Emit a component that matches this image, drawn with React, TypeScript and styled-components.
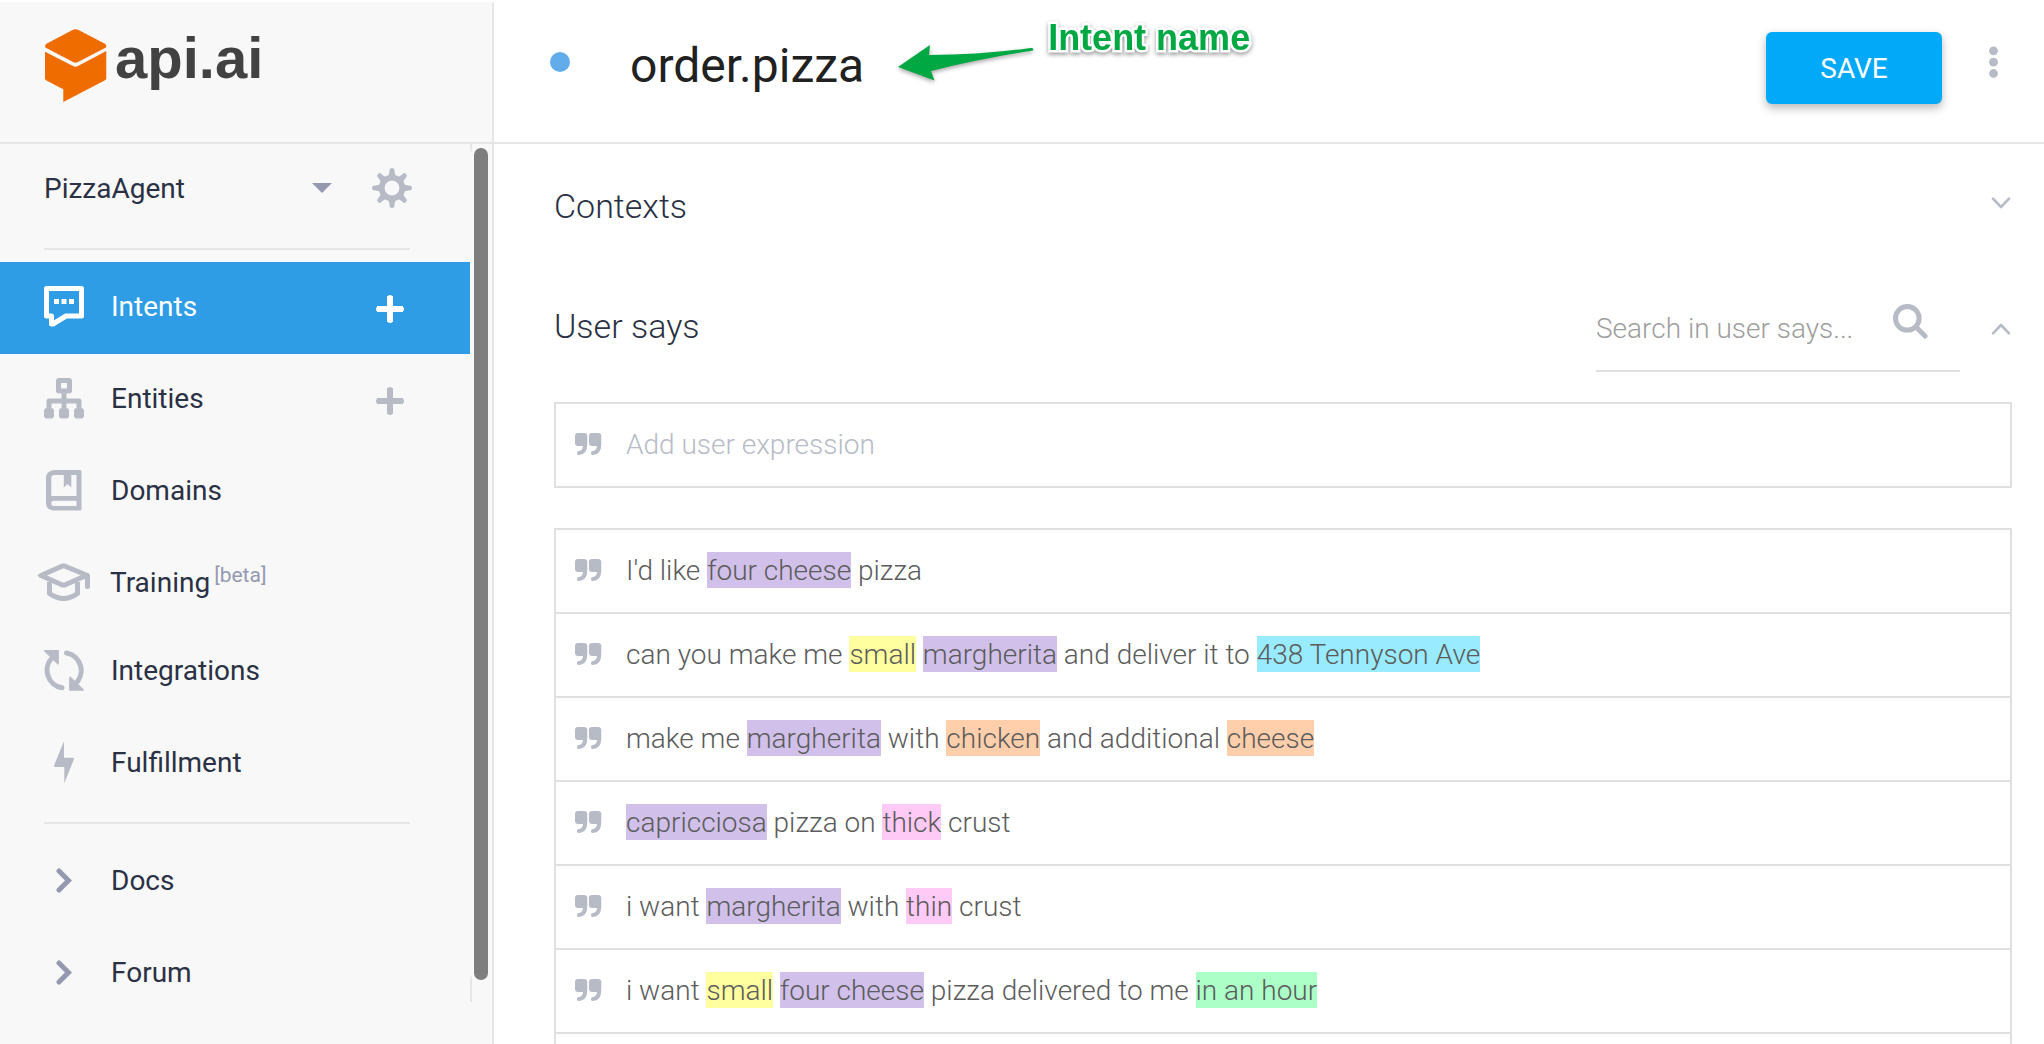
import React from "react";
import styled, { createGlobalStyle, css } from "styled-components";

const color = {
  line: "#e6e6e6",
  box: "#e0e0e0",
  side: "#f8f8f8",
  ink: "#2b3144",
  icon: "#b7bbc6",
  muted: "#9499b0",
  active: "#2e9de6",
  save: "#03a9f9",
  note: "#00a844",
};

const tags = {
  purple: "#d1c1ea",
  yellow: "#ffffa0",
  cyan: "#99ebff",
  orange: "#ffcfab",
  pink: "#ffcaf6",
  green: "#abffc7",
};

const GlobalStyle = createGlobalStyle`
  *, *::before, *::after { box-sizing: border-box; }
  body {
    margin: 0;
    background: #fff;
    color: ${color.ink};
    font-family: Roboto, "Liberation Sans", sans-serif;
    font-size: 28px;
  }
  button, input { font: inherit; color: inherit; }
  h1, h2, ul { margin: 0; padding: 0; font: inherit; }
  ul { list-style: none; }
  a { color: inherit; text-decoration: none; }
  svg { display: block; flex: none; }
`;

const bareButton = css`
  display: flex;
  align-items: center;
  justify-content: center;
  padding: 0;
  border: 0;
  background: none;
  cursor: pointer;
`;

const Page = styled.div`
  display: grid;
  grid-template-columns: 494px minmax(0, 1fr);
  height: 100vh;
  padding-top: 2px;
  overflow: hidden;
`;

/* ---------- sidebar ---------- */

const Sidebar = styled.aside`
  display: flex;
  flex-direction: column;
  min-height: 0;
  background: ${color.side};
  border-right: 2px solid ${color.line};
`;

const Brand = styled.a`
  display: flex;
  align-items: flex-start;
  gap: 8px;
  height: 142px;
  flex: none;
  padding: 27px 0 0 45px;
  border-bottom: 2px solid ${color.line};
`;

const BrandName = styled.span`
  color: #424242;
  font: 700 58px/58px "Liberation Sans", Arial, sans-serif;
`;

const SidebarBody = styled.div`
  display: flex;
  flex: 1;
  min-height: 0;
`;

const Menu = styled.nav`
  flex: 1;
  min-width: 0;
`;

const Track = styled.div`
  display: flex;
  width: 22px;
  padding: 4px 0 64px 4px;
  background: linear-gradient(
      to bottom,
      ${color.line} 4px,
      transparent 10px,
      transparent calc(100% - 70px),
      ${color.line} calc(100% - 64px),
      ${color.line} calc(100% - 42px),
      transparent calc(100% - 42px)
    )
    left / 2px 100% no-repeat;
`;

const Thumb = styled.div`
  width: 14px;
  border-radius: 7px;
  background: #7e7e7e;
`;

const AgentRow = styled.div`
  display: flex;
  align-items: center;
  height: 106px;
  margin: 0 60px 0 44px;
  padding-bottom: 16px;
  border-bottom: 2px solid ${color.line};
`;

const AgentButton = styled.button`
  ${bareButton}
  flex: 1;
  justify-content: space-between;
  height: 40px;
  margin-right: 40px;
`;

const IconButton = styled.button`
  ${bareButton}
  margin-right: -2px;
`;

const NavList = styled.ul`
  margin: 12px 0;
`;

const NavItem = styled.li<{ $active?: boolean; $short?: boolean }>`
  display: flex;
  height: ${(p) => (p.$short ? 88 : 92)}px;
  padding-right: 66px;
  background: ${(p) => (p.$active ? color.active : "transparent")};
  color: ${(p) => (p.$active ? "#fff" : color.ink)};
`;

const NavLink = styled.a<{ $short?: boolean }>`
  display: flex;
  flex: 1;
  align-items: center;
  padding: 0 0 ${(p) => (p.$short ? 0 : 4)}px 37px;
  gap: ${(p) => (p.$short ? 19 : 20)}px;
`;

const IconSlot = styled.span<{ $tone?: string }>`
  display: flex;
  justify-content: center;
  width: 54px;
  color: ${(p) => p.$tone ?? color.icon};
`;

const Beta = styled.sup`
  margin-left: 4px;
  color: ${color.muted};
  font-size: 21px;
  line-height: 0;
  vertical-align: 10px;
`;

const AddButton = styled.button<{ $tone: string }>`
  ${bareButton}
  padding-top: 2px;
  color: ${(p) => p.$tone};
`;

const Divider = styled.hr`
  height: 2px;
  margin: 0 60px 0 44px;
  border: 0;
  background: ${color.line};
`;

/* ---------- main ---------- */

const Main = styled.main`
  display: flex;
  flex-direction: column;
  min-width: 0;
  min-height: 0;
  overflow: hidden;
`;

const TopBar = styled.header`
  display: flex;
  align-items: flex-start;
  height: 142px;
  flex: none;
  padding: 30px 40px 0 56px;
  border-bottom: 2px solid ${color.line};
`;

const StatusSlot = styled.span`
  display: flex;
  align-items: center;
  height: 60px;
  margin-right: 60px;
`;

const StatusDot = styled.span`
  width: 20px;
  height: 20px;
  border-radius: 50%;
  background: #63aceb;
`;

const TitleBox = styled.div`
  position: relative;
  margin-right: auto;
`;

const Title = styled.h1`
  color: #212121;
  font-size: 48px;
  line-height: 68px;
`;

const Note = styled.div`
  position: absolute;
  top: -15px;
  left: 100%;
  display: flex;
  align-items: flex-start;
  gap: 14px;
  padding-left: 34px;
`;

const NoteArrow = styled.svg`
  margin-top: 28px;
  filter: drop-shadow(0 2px 2px rgba(0, 0, 0, 0.35));
`;

const NoteText = styled.span`
  color: ${color.note};
  font: 700 36px/42px "Liberation Sans", Arial, sans-serif;
  white-space: nowrap;
  -webkit-text-stroke: 5px #fff;
  paint-order: stroke fill;
  filter: drop-shadow(0 2px 2px rgba(0, 0, 0, 0.4));
`;

const SaveButton = styled.button`
  width: 176px;
  height: 72px;
  margin-right: 40px;
  padding: 0;
  border: 0;
  border-radius: 6px;
  background: ${color.save};
  box-shadow: 0 4px 10px rgba(0, 0, 0, 0.28);
  color: #fff;
  cursor: pointer;
`;

const KebabButton = styled.button`
  ${bareButton}
  width: 22px;
  height: 60px;
`;

const Content = styled.div`
  padding: 0 32px 0 60px;
`;

const SectionHead = styled.div<{ $height: number }>`
  display: flex;
  align-items: flex-start;
  height: ${(p) => p.$height}px;
  padding-top: 40px;
`;

const SectionTitle = styled.h2`
  flex: 1;
  font-size: 34px;
  font-weight: 300;
  line-height: 44px;
`;

const Toggle = styled.button<{ $height: number }>`
  ${bareButton}
  width: 22px;
  height: ${(p) => p.$height}px;
`;

const SearchField = styled.label`
  display: flex;
  align-items: flex-start;
  width: 364px;
  margin-right: 30px;
  padding: 0 32px 18px 0;
  border-bottom: 2px solid ${color.box};
`;

const TextInput = styled.input<{ $hint: string }>`
  flex: 1;
  min-width: 0;
  height: 48px;
  padding: 0;
  border: 0;
  outline: 0;
  background: none;
  font-weight: 300;
  &::placeholder {
    color: ${(p) => p.$hint};
    opacity: 1;
  }
`;

const rowShape = css`
  display: flex;
  align-items: center;
  gap: 24px;
  padding: 0 19px 2px;
  font-weight: 300;
`;

const ExpressionField = styled.label`
  ${rowShape}
  height: 86px;
  border: 2px solid ${color.box};
`;

const Expressions = styled.ul`
  margin-top: 40px;
  border: 2px solid ${color.box};
`;

const Expression = styled.li`
  ${rowShape}
  height: 84px;
  border-bottom: 2px solid ${color.box};
  color: #5c5c5c;
`;

const Mark = styled.mark<{ $tag: keyof typeof tags }>`
  padding: 2px 0 1px;
  background: ${(p) => tags[p.$tag]};
  color: inherit;
`;

/* ---------- drawings ---------- */

const BrandMark = () => (
  <svg width="62" height="74" viewBox="0 0 62 74" fill="#ef6c00" aria-hidden="true">
    <path d="M27.500 1Q30.500-.7 33.500 1L60 14.800Q62 16.200 61 18.600L33 33Q30.500 34.400 28 33L.4 18.600Q-.5 16.200 1.500 14.800Z" />
    <path d="M0 22.700L28 37Q30.500 38.300 33 37L61.300 22V49.500Q61.300 50.600 60 51.300L18.300 73V60.200L1 51.300Q0 50.700 0 49.500Z" />
  </svg>
);

const Gear = () => (
  <svg width="40" height="40" viewBox="-20 -20 40 40" stroke={color.icon} fill="none" aria-hidden="true">
    <circle r="10.300" strokeWidth="5.800" />
    {[0, 45, 90, 135, 180, 225, 270, 315].map((a) => (
      <g key={a} transform={`rotate(${a})`}>
        <path d="M0-11V-17.400" strokeWidth="5" strokeLinecap="round" />
        <path d="M-5-11.500Q-2.500-12.500-2.500-16L2.500-16Q2.500-12.500 5-11.500Z" fill={color.icon} stroke="none" />
      </g>
    ))}
  </svg>
);

const Caret = () => (
  <svg width="20" height="10" viewBox="0 0 20 10" fill={color.muted} aria-hidden="true">
    <path d="M0 0H20L10 10Z" />
  </svg>
);

const IntentsIcon = () => (
  <svg width="40" height="41" viewBox="0 0 40 41" fill="none" stroke="currentColor" strokeWidth="5" strokeLinejoin="round" aria-hidden="true">
    <path d="M2.500 2.500H37.500V30H22L9 38H7.500V30H2.500Z" />
    <path d="M10 13h5v5h-5zM17.500 13h5v5h-5zM25 13h5v5h-5z" fill="currentColor" stroke="none" />
  </svg>
);

const EntitiesIcon = () => (
  <svg width="40" height="41" viewBox="0 0 40 41" fill="none" stroke="currentColor" strokeWidth="5" strokeLinejoin="round" aria-hidden="true">
    <rect x="14.500" y="2.500" width="11" height="10.500" rx="0.500" />
    <path d="M20 15V31M5 31V23H35V31" />
    <g fill="currentColor" stroke="none">
      <rect x="0" y="30" width="10" height="10.500" rx="3" />
      <rect x="15" y="30" width="10" height="10.500" rx="3" />
      <rect x="30" y="30" width="10" height="10.500" rx="3" />
    </g>
  </svg>
);

const DomainsIcon = () => (
  <svg width="36" height="41" viewBox="0 0 36 41" fill="currentColor" aria-hidden="true">
    <path
      fillRule="evenodd"
      d="M8 0H34Q35.500 0 35.500 1.500V39Q35.500 40.500 34 40.500H7Q0 39.500 0 33V8Q0 1 8 0ZM8.500 5Q5.300 5 5.300 8V26H30.500V5H25.300V17.500L21.500 14L17.800 17.500V5ZM8 30.800Q5.300 31 5.300 33.500T8 36H30.500V30.800Z"
    />
  </svg>
);

const TrainingIcon = () => (
  <svg width="54" height="38" viewBox="0 0 54 38" fill="none" stroke="currentColor" strokeWidth="5" strokeLinejoin="round" strokeLinecap="round" aria-hidden="true">
    <path d="M4 12.500L24.800 3.200Q26.500 2.600 28.200 3.200L50.500 12.500V23.500M4 12.500L24.800 21.800Q26.500 22.400 28.200 21.800L48 13" />
    <path d="M12.500 19V30.500Q26.500 40.500 40.500 30.500V19" strokeLinecap="butt" />
    <path d="M0 12.500L8 9V16Z" fill="currentColor" stroke="none" />
  </svg>
);

const IntegrationsIcon = () => (
  <svg width="40" height="41" viewBox="0 0 40 41" fill="none" stroke="currentColor" strokeWidth="5" strokeLinecap="round" strokeLinejoin="round" aria-hidden="true">
    <path d="M9 7A17.800 17.800 0 0 0 18 37.800" />
    <path d="M22.500 3A17.800 17.800 0 0 1 31 34" />
    <path d="M1 .8H14V13.500ZM39 39.800H26V27.500Z" fill="currentColor" strokeWidth="1.800" />
  </svg>
);

const FulfillmentIcon = () => (
  <svg width="20" height="41" viewBox="0 0 20 41" fill="currentColor" aria-hidden="true">
    <path d="M9.500.5L10 0V15.800H19Q20.300 15.800 19.800 17.500L10.800 40L10.300 41V25H1Q-.3 25 .2 23Z" />
  </svg>
);

const LinkChevron = () => (
  <svg width="16" height="25" viewBox="0 0 16 25" fill="none" stroke="currentColor" strokeWidth="5" strokeLinecap="round" aria-hidden="true">
    <path d="M3 3L12.500 12.500L3 22" />
  </svg>
);

const Plus = () => (
  <svg width="28" height="28" viewBox="0 0 28 28" stroke="currentColor" strokeWidth="6" aria-hidden="true">
    <path d="M14 2.500V25.500M2.500 14H25.500" strokeLinecap="round" strokeWidth="5" />
    <path d="M14 1V27M1 14H27" />
  </svg>
);

const Kebab = () => (
  <svg width="10" height="32" viewBox="0 0 10 32" fill={color.icon} aria-hidden="true">
    <circle cx="5.500" cy="4.800" r="4.400" />
    <circle cx="5.500" cy="16.200" r="4.400" />
    <circle cx="5.500" cy="27.500" r="4.400" />
  </svg>
);

const Chevron = ({ up }: { up?: boolean }) => (
  <svg width="20" height="12" viewBox="0 0 20 12" fill="none" stroke={color.icon} strokeWidth="2.600" strokeLinecap="round" strokeLinejoin="round" aria-hidden="true">
    <path d={up ? "M2 10.300L10 2L18 10.300" : "M2 1.700L10 10L18 1.700"} />
  </svg>
);

const Magnifier = () => (
  <svg width="35" height="35" viewBox="0 0 35 35" fill="none" stroke={color.icon} strokeWidth="5" aria-hidden="true">
    <circle cx="14.300" cy="14.300" r="11.800" />
    <path d="M23 23L32 32" strokeLinecap="round" />
  </svg>
);

const Quote = () => (
  <svg width="27" height="22" viewBox="0 0 27 22" fill={color.icon} aria-hidden="true">
    {[0, 14].map((x) => (
      <path
        key={x}
        transform={`translate(${x} 0)`}
        d="M3 0H9Q12.300 0 12.300 3V11Q12.300 21.500 4 22Q2 22 2 20.500V19.500Q2 18 4 18Q7.600 17.400 8 13H3Q0 13 0 10V3Q0 0 3 0Z"
      />
    ))}
  </svg>
);

/* ---------- data ---------- */

type Item = { name: string; icon: React.ReactNode; active?: boolean; add?: boolean; beta?: boolean };

const items: Item[] = [
  { name: "Intents", icon: <IntentsIcon />, active: true, add: true },
  { name: "Entities", icon: <EntitiesIcon />, add: true },
  { name: "Domains", icon: <DomainsIcon /> },
  { name: "Training", icon: <TrainingIcon />, beta: true },
  { name: "Integrations", icon: <IntegrationsIcon /> },
  { name: "Fulfillment", icon: <FulfillmentIcon /> },
];

type Part = string | [string, keyof typeof tags];

const expressions: Part[][] = [
  ["I'd like ", ["four cheese", "purple"], " pizza"],
  ["can you make me ", ["small", "yellow"], " ", ["margherita", "purple"], " and deliver it to ", ["438 Tennyson Ave", "cyan"]],
  ["make me ", ["margherita", "purple"], " with ", ["chicken", "orange"], " and additional ", ["cheese", "orange"]],
  [["capricciosa", "purple"], " pizza on ", ["thick", "pink"], " crust"],
  ["i want ", ["margherita", "purple"], " with ", ["thin", "pink"], " crust"],
  ["i want ", ["small", "yellow"], " ", ["four cheese", "purple"], " pizza delivered to me ", ["in an hour", "green"]],
  [],
];

export default function App() {
  return (
    <>
      <GlobalStyle />
      <Page>
        <Sidebar>
          <Brand href="#">
            <BrandMark />
            <BrandName>api.ai</BrandName>
          </Brand>
          <SidebarBody>
            <Menu>
              <AgentRow>
                <AgentButton>
                  PizzaAgent
                  <Caret />
                </AgentButton>
                <IconButton aria-label="Agent settings">
                  <Gear />
                </IconButton>
              </AgentRow>
              <NavList>
                {items.map((it) => (
                  <NavItem key={it.name} $active={it.active} $short={it.beta}>
                    <NavLink href="#" $short={it.beta}>
                      <IconSlot $tone={it.active ? "#fff" : undefined}>{it.icon}</IconSlot>
                      <span>
                        {it.name}
                        {it.beta && <Beta>[beta]</Beta>}
                      </span>
                    </NavLink>
                    {it.add && (
                      <AddButton $tone={it.active ? "#fff" : color.icon} aria-label={`Add to ${it.name}`}>
                        <Plus />
                      </AddButton>
                    )}
                  </NavItem>
                ))}
              </NavList>
              <Divider />
              <NavList>
                {["Docs", "Forum"].map((name) => (
                  <NavItem key={name}>
                    <NavLink href="#">
                      <IconSlot $tone={color.muted}>
                        <LinkChevron />
                      </IconSlot>
                      <span>{name}</span>
                    </NavLink>
                  </NavItem>
                ))}
              </NavList>
            </Menu>
            <Track>
              <Thumb />
            </Track>
          </SidebarBody>
        </Sidebar>

        <Main>
          <TopBar>
            <StatusSlot>
              <StatusDot />
            </StatusSlot>
            <TitleBox>
              <Title>order.pizza</Title>
              <Note>
                <NoteArrow width="136" height="38" viewBox="0 0 136 38" fill={color.note} aria-hidden="true">
                  <path d="M0 22L32 0L31 10Q80 10 133 3Q136 3 135 5.500Q80 14 33 26L36.500 35.500Z" />
                </NoteArrow>
                <NoteText>Intent name</NoteText>
              </Note>
            </TitleBox>
            <SaveButton>SAVE</SaveButton>
            <KebabButton aria-label="More actions">
              <Kebab />
            </KebabButton>
          </TopBar>

          <Content>
            <SectionHead $height={120}>
              <SectionTitle>Contexts</SectionTitle>
              <Toggle $height={38} aria-label="Expand contexts">
                <Chevron />
              </Toggle>
            </SectionHead>
            <SectionHead $height={138}>
              <SectionTitle>User says</SectionTitle>
              <SearchField>
                <TextInput $hint="#9e9e9e" placeholder="Search in user says..." aria-label="Search in user says" />
                <Magnifier />
              </SearchField>
              <Toggle $height={50} aria-label="Collapse user says">
                <Chevron up />
              </Toggle>
            </SectionHead>

            <ExpressionField>
              <Quote />
              <TextInput $hint={color.icon} placeholder="Add user expression" aria-label="Add user expression" />
            </ExpressionField>

            <Expressions>
              {expressions.map((parts, i) => (
                <Expression key={i}>
                  <Quote />
                  <span>
                    {parts.map((p, j) =>
                      typeof p === "string" ? (
                        p
                      ) : (
                        <Mark key={j} $tag={p[1]}>
                          {p[0]}
                        </Mark>
                      ),
                    )}
                  </span>
                </Expression>
              ))}
            </Expressions>
          </Content>
        </Main>
      </Page>
    </>
  );
}
